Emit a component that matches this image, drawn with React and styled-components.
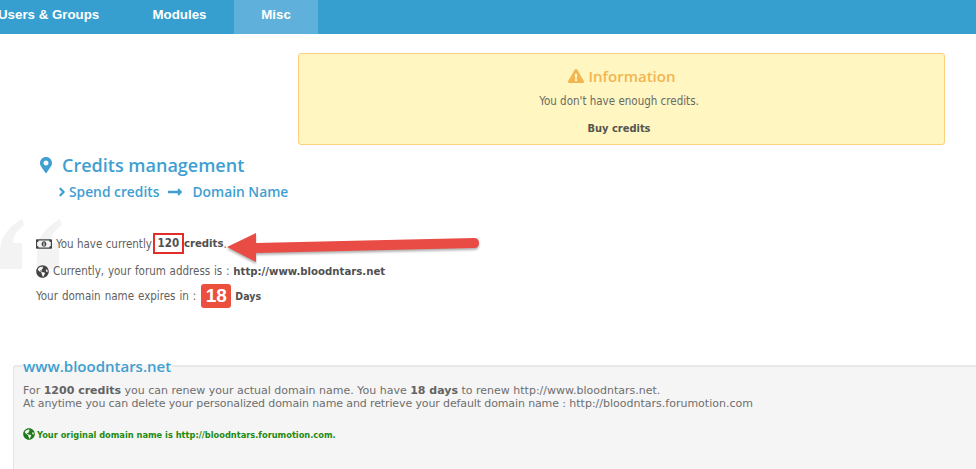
import React from 'react'
import styled, { createGlobalStyle } from 'styled-components'
import { FaMapMarkerAlt, FaExclamationTriangle, FaGlobeAmericas, FaLongArrowAltRight, FaAngleRight, FaRegMoneyBillAlt } from 'react-icons/fa'

const GlobalStyle = createGlobalStyle`
  html, body {
    margin: 0;
    padding: 0;
    background: #fff;
    overflow: hidden;
  }
  body {
    width: 976px;
    height: 469px;
    font-family: "DejaVu Sans", Verdana, sans-serif;
    font-size: 11px;
    color: #5f5f5f;
  }
`

const Page = styled.div`
  position: relative;
  width: 976px;
  height: 469px;
  overflow: hidden;
`

const Nav = styled.nav`
  display: flex;
  height: 34px;
  background: #369fcf;
`

const Tab = styled.a`
  display: flex;
  align-items: center;
  justify-content: ${p => (p.$first ? 'flex-start' : 'center')};
  box-sizing: border-box;
  width: ${p => p.$width}px;
  margin-left: ${p => (p.$first ? -2 : 0)}px;
  padding-bottom: 6px;
  background: ${p => (p.$active ? '#5fb0da' : 'transparent')};
  color: #fff;
  font-family: "Liberation Sans", Arial, sans-serif;
  font-size: 13.3px;
  font-weight: bold;
  white-space: nowrap;
`

const AlertRow = styled.div`
  display: flex;
  justify-content: flex-end;
  padding: 19px 31px 0 0;
`

const Alert = styled.div`
  box-sizing: border-box;
  width: 647px;
  height: 92px;
  padding-top: 12px;
  display: flex;
  flex-direction: column;
  align-items: center;
  background: #fff6c2;
  border: 1px solid #fbd17f;
  border-radius: 3px;
  font-family: "DejaVu Sans Condensed", "DejaVu Sans", sans-serif;
  font-stretch: condensed;
`

const AlertTitle = styled.div`
  display: flex;
  align-items: center;
  gap: 5px;
  color: #f2b550;
  font-family: "Open Sans", "DejaVu Sans", sans-serif;
  font-stretch: normal;
  font-size: 15px;
  font-weight: 600;
  line-height: 20px;
  svg {
    font-size: 16px;
  }
`

const AlertText = styled.div`
  margin: 8px 5px 0 0;
  font-size: 11.5px;
  line-height: 14px;
  color: #6a6a62;
`

const BuyLink = styled.a`
  margin: 14px 5px 0 0;
  font-size: 11px;
  font-weight: bold;
  line-height: 14px;
  color: #55554f;
`

const Heading = styled.header`
  padding: 9px 0 0 38px;
  color: #3f9fd0;
  font-family: "Open Sans", sans-serif;
  font-weight: 600;
`

const HeadingTitle = styled.h1`
  display: flex;
  align-items: center;
  gap: 8px;
  margin: 0;
  font-size: 18px;
  font-weight: 600;
  line-height: 22px;
`

const Crumbs = styled.div`
  display: flex;
  align-items: center;
  margin: 6px 0 0 17px;
  font-size: 13.8px;
  line-height: 20px;
`

const CrumbArrow = styled(FaLongArrowAltRight)`
  margin: 0 9px 0 8px;
  font-size: 16px;
`

const Summary = styled.section`
  position: relative;
  padding: 28px 0 0 36px;
  font-family: "DejaVu Sans Condensed", "DejaVu Sans", sans-serif;
  font-stretch: condensed;
  font-size: 11.5px;
`

const SummaryRow = styled.div`
  display: flex;
  align-items: center;
  height: ${p => p.$height}px;
  word-spacing: ${p => p.$spread || 0}px;
  white-space: pre;
`

const RowIcon = styled.span`
  display: inline-flex;
  flex: none;
  margin-right: ${p => p.$gap}px;
  color: #444;
  font-size: ${p => p.$size}px;
`

const Bold = styled.b`
  font-size: 11.3px;
  font-weight: bold;
  color: #505050;
`

const Boxed = styled.b`
  display: inline-block;
  box-sizing: border-box;
  width: 31px;
  height: 21px;
  margin-left: 1px;
  line-height: 17px;
  text-align: center;
  border: 2px solid #e22d28;
  color: #505050;
`

const DaysBadge = styled.span`
  display: inline-block;
  width: 30px;
  height: 24px;
  margin: 0 4px 0 1px;
  border-radius: 3px;
  background: #ec4f3d;
  color: #fff;
  font-family: "Liberation Sans", Arial, sans-serif;
  font-size: 19px;
  font-weight: bold;
  line-height: 24px;
  text-align: center;
`

const DaysLabel = styled.b`
  font-size: 10.5px;
  color: #505050;
`

const Quote = styled.svg`
  position: absolute;
  left: 0;
  top: 218px;
  width: 62px;
  height: 52px;
`

const Annotation = styled.svg`
  position: absolute;
  left: 222px;
  top: 228px;
  width: 262px;
  height: 40px;
  filter: drop-shadow(0 2px 1px rgba(0, 0, 0, 0.3));
`

const Domain = styled.fieldset`
  box-sizing: border-box;
  margin: 51px 0 0 13px;
  padding: 7px 9px 0;
  height: 130px;
  background: #f5f5f5;
  border: 0;
  border-top: 2px solid #e9e9e9;
  border-left: 1px solid #e4e4e4;
  border-radius: 3px 0 0 0;
`

const DomainLegend = styled.legend`
  padding: 0 1px 0 0;
  color: #3f9fd0;
  font-family: "Open Sans", sans-serif;
  font-size: 15px;
  font-weight: 600;
  line-height: 16px;
`

const DomainText = styled.p`
  margin: 3px 0 0;
  line-height: 13px;
  color: #6e6e6e;
  b {
    color: #636363;
  }
`

const TightLine = styled.span`
  letter-spacing: -0.12px;
`

const OriginalDomain = styled.p`
  display: flex;
  align-items: center;
  gap: 2px;
  margin: 18px 0 0;
  font-family: "DejaVu Sans Condensed", "DejaVu Sans", sans-serif;
  font-stretch: condensed;
  font-size: 9.2px;
  font-weight: bold;
  color: #1d8a12;
  svg {
    font-size: 12px;
    color: #1d7a18;
  }
`

const App = () => {
  return (
    <Page>
      <GlobalStyle />
      <Nav>
        <Tab $width={127} $first>Users &amp; Groups</Tab>
        <Tab $width={109}>Modules</Tab>
        <Tab $width={84} $active>Misc</Tab>
      </Nav>
      <AlertRow>
        <Alert>
          <AlertTitle><FaExclamationTriangle />Information</AlertTitle>
          <AlertText>You don't have enough credits.</AlertText>
          <BuyLink>Buy credits</BuyLink>
        </Alert>
      </AlertRow>
      <Heading>
        <HeadingTitle><FaMapMarkerAlt size={16} />Credits management</HeadingTitle>
        <Crumbs>
          <FaAngleRight size={14} />
          <span> Spend credits</span>
          <CrumbArrow />
          <span>Domain Name</span>
        </Crumbs>
      </Heading>
      <Quote viewBox="0 0 62 52" fill="#f3f3f3">
        <path d="M22 1 C8 9 0 20 0 34 L0 51 L22 51 L22 25 L13 25 C13 18 18 12 24 7 Z" />
        <path d="M60 1 C46 9 37 20 37 34 L37 51 L59 51 L59 25 L50 25 C50 18 55 12 62 7 Z" />
      </Quote>
      <Summary>
        <SummaryRow $height={27}>
          <RowIcon $size={16} $gap={4}><FaRegMoneyBillAlt /></RowIcon>
          You have currently<Boxed>120</Boxed><Bold>credits</Bold>.
        </SummaryRow>
        <SummaryRow $height={28} $spread={0.5}>
          <RowIcon $size={13} $gap={4}><FaGlobeAmericas /></RowIcon>
          Currently, your forum address is : <Bold>http://www.bloodntars.net</Bold>
        </SummaryRow>
        <SummaryRow $height={22} $spread={0.7}>
          Your domain name expires in : <DaysBadge>18</DaysBadge><DaysLabel>Days</DaysLabel>
        </SummaryRow>
      </Summary>
      <Annotation viewBox="0 0 262 40">
        <path d="M5 19 L34 5 L34 15 L252 10 Q257 10 257 15 Q257 20 252 20 L34 25 L34 34 Z" fill="#e94b45" />
      </Annotation>
      <Domain>
        <DomainLegend>www.bloodntars.net</DomainLegend>
        <DomainText>
          For <b>1200 credits</b> you can renew your actual domain name. You have <b>18 days</b> to renew http://www.bloodntars.net.
          <br />
          <TightLine>At anytime you can delete your personalized domain name and retrieve your default domain name :</TightLine> http://bloodntars.forumotion.com
        </DomainText>
        <OriginalDomain>
          <FaGlobeAmericas />
          Your original domain name is http://bloodntars.forumotion.com.
        </OriginalDomain>
      </Domain>
    </Page>
  )
}

export default App
